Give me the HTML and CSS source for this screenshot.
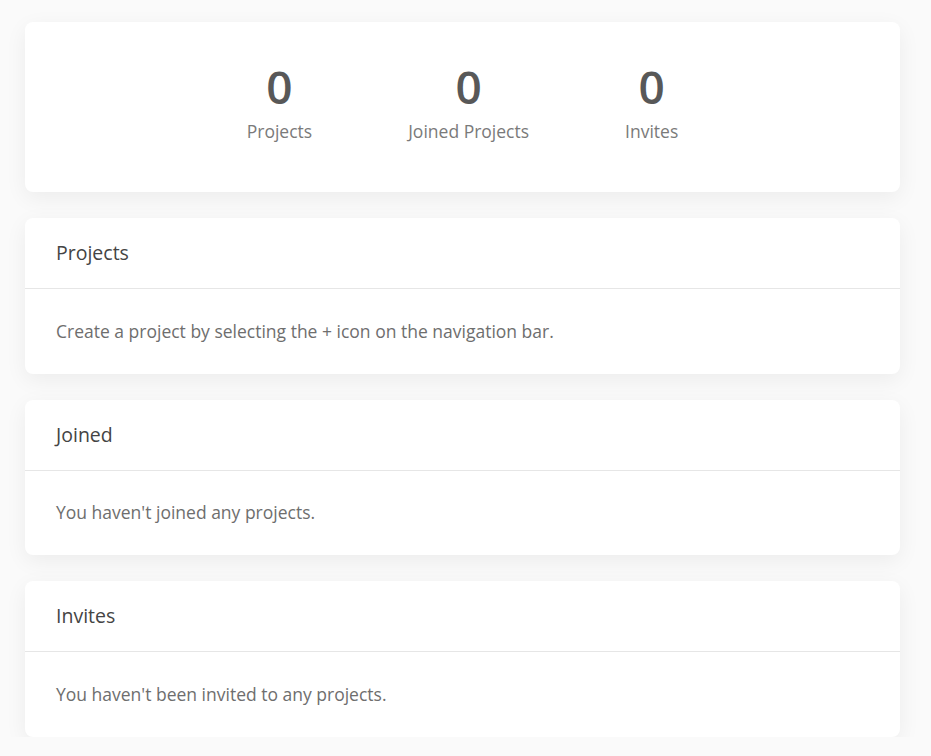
FILE: index.html
```html
<!DOCTYPE html>
<html>
<head>
<meta charset="utf-8">
<link rel="stylesheet" href="styles.css">
</head>
<body>
<main class="page">
  <section class="card stats">
    <div class="stat"><div class="stat-num">0</div><div class="stat-label">Projects</div></div>
    <div class="stat"><div class="stat-num">0</div><div class="stat-label">Joined Projects</div></div>
    <div class="stat"><div class="stat-num">0</div><div class="stat-label">Invites</div></div>
  </section>
  <section class="card">
    <div class="card-head">Projects</div>
    <div class="card-body">Create a project by selecting the + icon on the navigation bar.</div>
  </section>
  <section class="card">
    <div class="card-head">Joined</div>
    <div class="card-body">You haven't joined any projects.</div>
  </section>
  <section class="card">
    <div class="card-head">Invites</div>
    <div class="card-body">You haven't been invited to any projects.</div>
  </section>
</main>
</body>
</html>
```
FILE: styles.css
```css
html, body {
  margin: 0;
  padding: 0;
  background: #fafafa;
  font-family: "Open Sans", "Liberation Sans", sans-serif;
}
.page {
  padding: 22px 31px 0 25px;
  display: flex;
  flex-direction: column;
  gap: 26px;
}
.card {
  background: #fff;
  border-radius: 8px;
  box-shadow: 0 6px 22px rgba(0, 0, 0, 0.06);
}
.stats {
  height: 170px;
  box-sizing: border-box;
  padding-bottom: 10px;
  display: flex;
  justify-content: center;
  align-items: center;
  gap: 96px;
}
.stat {
  display: flex;
  flex-direction: column;
  align-items: center;
}
.stat-num {
  font-size: 46px;
  font-weight: 600;
  color: #585858;
  line-height: 50px;
}
.stat-label {
  font-size: 17.5px;
  color: #7a7a7a;
  line-height: 24px;
  margin-top: 8px;
}
.card-head {
  height: 71px;
  box-sizing: border-box;
  padding: 0 31px 1px;
  display: flex;
  align-items: center;
  font-size: 19.5px;
  color: #444;
  border-bottom: 1px solid #e6e6e6;
}
.card-body {
  height: 84.5px;
  box-sizing: border-box;
  padding: 0 31px 1px;
  display: flex;
  align-items: center;
  font-size: 17.5px;
  color: #6e6e6e;
}
```
